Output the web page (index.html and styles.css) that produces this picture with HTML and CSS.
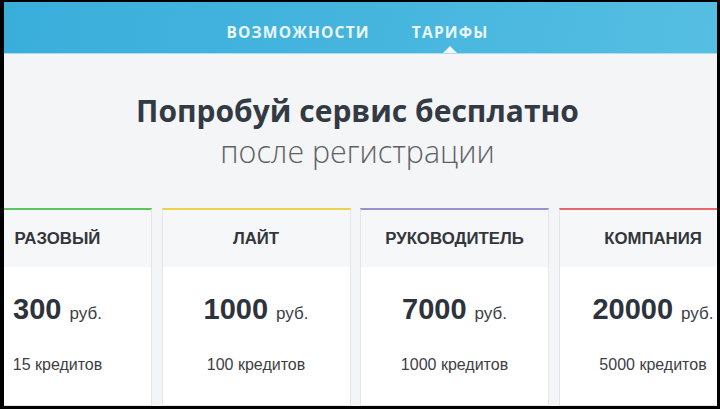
FILE: index.html
```html
<!DOCTYPE html>
<html lang="ru">
<head>
<meta charset="utf-8">
<link rel="stylesheet" href="styles.css">
</head>
<body>
<div class="frame">
  <header class="topbar">
    <nav class="nav">
      <a class="nav-item">ВОЗМОЖНОСТИ</a>
      <a class="nav-item active">ТАРИФЫ</a>
    </nav>
  </header>
  <main class="content">
    <section class="hero">
      <h1 class="title">Попробуй сервис бесплатно</h1>
      <p class="subtitle">после регистрации</p>
    </section>
    <section class="plans">
      <div class="plan green">
        <div class="plan-head">РАЗОВЫЙ</div>
        <div class="plan-body">
          <div class="price"><span class="num">300</span><span class="cur">руб.</span></div>
          <div class="credits">15 кредитов</div>
        </div>
      </div>
      <div class="plan yellow">
        <div class="plan-head">ЛАЙТ</div>
        <div class="plan-body">
          <div class="price"><span class="num">1000</span><span class="cur">руб.</span></div>
          <div class="credits">100 кредитов</div>
        </div>
      </div>
      <div class="plan purple">
        <div class="plan-head">РУКОВОДИТЕЛЬ</div>
        <div class="plan-body">
          <div class="price"><span class="num">7000</span><span class="cur">руб.</span></div>
          <div class="credits">1000 кредитов</div>
        </div>
      </div>
      <div class="plan red">
        <div class="plan-head">КОМПАНИЯ</div>
        <div class="plan-body">
          <div class="price"><span class="num">20000</span><span class="cur">руб.</span></div>
          <div class="credits">5000 кредитов</div>
        </div>
      </div>
    </section>
  </main>
</div>
</body>
</html>
```

FILE: styles.css
```css
html, body {
  margin: 0;
  padding: 0;
  background: #000;
  height: 409px;
  overflow: hidden;
}
body {
  padding: 2px 3px 3px 4px;
  box-sizing: border-box;
}
.frame {
  width: 713px;
  height: 404px;
  overflow: hidden;
  background: #f4f5f7;
  display: flex;
  flex-direction: column;
}
.topbar {
  height: 52px;
  flex: none;
  background: linear-gradient(100deg, #3aaedb 0%, #45b5de 50%, #56bee2 100%);
  border-bottom: 1px solid #a8dcee;
  box-sizing: border-box;
  position: relative;
}
.nav {
  display: flex;
  justify-content: center;
  gap: 42px;
  padding-top: 20px;
  padding-right: 6px;
}
.nav-item {
  font-family: "Open Sans", sans-serif;
  font-weight: 700;
  font-size: 15.5px;
  letter-spacing: 1.2px;
  color: #eaf7fc;
  line-height: 20px;
  position: relative;
}
.nav-item.active::after {
  content: "";
  position: absolute;
  left: 50%;
  margin-left: -7px;
  top: 24px;
  width: 0;
  height: 0;
  border-left: 7px solid transparent;
  border-right: 7px solid transparent;
  border-bottom: 7px solid #f4f5f7;
}
.content {
  flex: 1;
  display: flex;
  flex-direction: column;
}
.hero {
  text-align: center;
  padding-top: 38px;
  padding-right: 6px;
}
.title {
  margin: 0;
  font-family: "Open Sans", sans-serif;
  font-weight: 700;
  font-size: 30px;
  line-height: 38px;
  color: #333a44;
}
.subtitle {
  margin: 3px 0 0;
  font-family: "Open Sans", sans-serif;
  font-weight: 300;
  font-size: 30.4px;
  line-height: 38px;
  color: #5e6166;
}
.plans {
  display: flex;
  gap: 9.5px;
  margin-left: -41px;
  margin-top: 37px;
  flex: 1;
}
.plan {
  width: 189px;
  flex: none;
  background: #fff;
  border: 1px solid #e3e5e9;
  border-top: 2px solid;
  box-sizing: border-box;
  display: flex;
  flex-direction: column;
  font-family: "Liberation Sans", Arial, sans-serif;
}
.plan.green { border-top-color: #5fc35f; }
.plan.yellow { border-top-color: #ecd04a; }
.plan.purple { border-top-color: #9a90cc; }
.plan.red { border-top-color: #e8686a; }
.plan-head {
  height: 57px;
  background: #f6f7f9;
  display: flex;
  align-items: center;
  justify-content: center;
  font-weight: 700;
  font-size: 16.8px;
  color: #33363b;
}
.plan-body {
  flex: 1;
  display: flex;
  flex-direction: column;
  align-items: center;
  padding-top: 25px;
}
.price {
  display: flex;
  align-items: baseline;
  gap: 8px;
  color: #2e333b;
}
.num {
  font-weight: 700;
  font-size: 29px;
  line-height: 34px;
}
.cur {
  font-size: 17px;
  color: #3a3e44;
}
.credits {
  margin-top: 30px;
  font-size: 16px;
  color: #3d4046;
}
```
